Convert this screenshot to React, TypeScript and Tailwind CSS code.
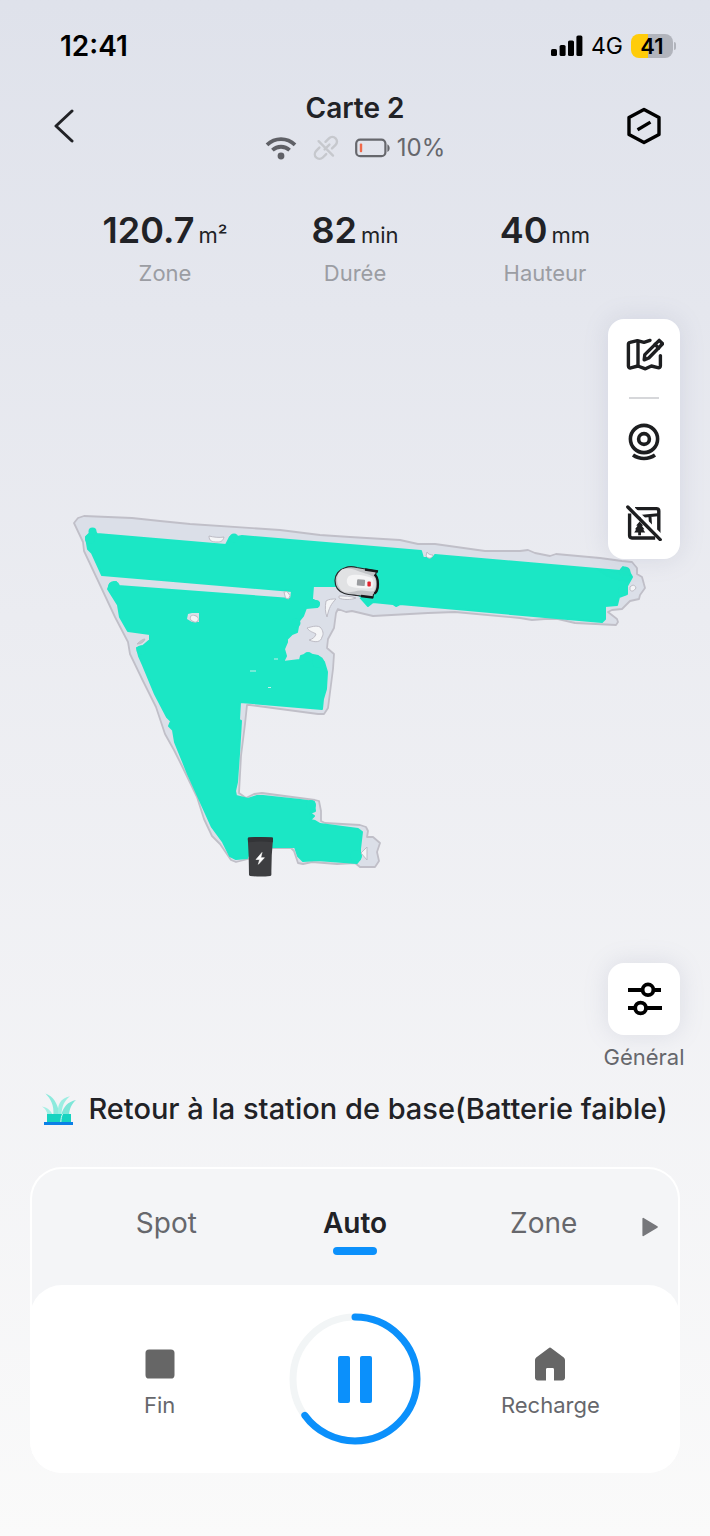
import { useState } from "react";

const stats = [
  { value: "120.7", unit: "m²", label: "Zone" },
  { value: "82", unit: "min", label: "Durée" },
  { value: "40", unit: "mm", label: "Hauteur" },
];

const modes = ["Spot", "Auto", "Zone"];

const progress = 65;

function SignalIcon() {
  return (
    <svg viewBox="0 0 32 22" className="w-8 h-[22px]" fill="#000">
      <rect x="0" y="14" width="6" height="7" rx="1.6" />
      <rect x="8.6" y="10" width="6" height="11" rx="1.6" />
      <rect x="17" y="5.5" width="6" height="15.5" rx="1.6" />
      <rect x="25.4" y="0.5" width="6" height="20.5" rx="1.6" />
    </svg>
  );
}

function WifiIcon() {
  return (
    <svg viewBox="0 0 32 24" className="w-8 h-6" fill="none" stroke="#5f6066" strokeWidth="3.8">
      <path d="M2 8.8C10 1.200 22 1.200 30 8.800" />
      <path d="M7.4 14.200c5-4.600 12.200-4.600 17.200 0" />
      <circle cx="16" cy="20" r="3.4" fill="#5f6066" stroke="none" />
    </svg>
  );
}

function UnlinkIcon() {
  return (
    <svg viewBox="0 0 26 26" className="w-[26px] h-[26px]" fill="none" stroke="#c6c8cd" strokeWidth="2.4" strokeLinecap="round">
      <path d="M12.5 6.8 16 3.3a4.6 4.6 0 0 1 6.6 6.6L19 13.400" />
      <path d="M6.4 12.6 3.2 15.9a4.6 4.6 0 0 0 6.6 6.6l3.4-3.4" />
      <path d="M5.6 6.2 20 20.6M11.6 14.400l4.800-4.800" />
    </svg>
  );
}

function BatteryIcon() {
  return (
    <svg viewBox="0 0 36 20" className="w-9 h-5" fill="none">
      <rect x="1.2" y="1.6" width="29.2" height="16.6" rx="4" stroke="#66676c" strokeWidth="2.2" />
      <rect x="4.8" y="5.6" width="2.4" height="8.6" rx="1" fill="#f0694a" />
      <path d="M32.4 6.2c3 1.6 3 6.2 0 7.8z" fill="#66676c" />
    </svg>
  );
}

function MapEditIcon() {
  return (
    <svg viewBox="0 0 40 36" className="w-10 h-9" fill="none" stroke="#1d1e20" strokeWidth="3.400" strokeLinejoin="round" strokeLinecap="round">
      <path d="M26 3.400 20 5.400 13.400 3.600 6 5.400a2 2 0 0 0-1.600 2V29c0 1.600 1 2.200 2.400 1.800l7-1.800 7.600 2.800L27.400 29l6.400 1.600c1.800.4 2.600-.2 2.600-1.800V18.600" />
      <path d="M14 4.400v24.400" />
      <path d="m20.200 22.800.6-5.200L35.200 3.400l3.400 3.400L24.800 21z" />
      <path d="m31 7.400 3.600 3.800" />
    </svg>
  );
}

function CameraIcon() {
  return (
    <svg viewBox="0 0 32 38" className="w-8 h-[38px]" fill="none" stroke="#1d1e20" strokeWidth="3.600">
      <circle cx="16" cy="16" r="13.600" />
      <circle cx="16" cy="16" r="5.400" />
      <path d="M5 32c6.400 4.600 15.600 4.600 22 0" />
    </svg>
  );
}

function HideObjectsIcon() {
  return (
    <svg viewBox="0 0 36 36" className="w-9 h-9" fill="none" stroke="#1d1e20" strokeWidth="3.400">
      <path d="M9 3.600h21.400c1.600 0 2.400.8 2.400 2.400v22.600M3.600 8.600v22c0 1.600.8 2.400 2.400 2.400h23.200" />
      <path d="M13.600 11.400 32 9.800M24 12l.6 9" strokeWidth="3" />
      <path
        d="m13.600 16.400 3.600 4.200-1.400.2 2.600 3.400-1.200.2 2 3h-4.200v2.800h-2.800v-2.800H8.200l2-3-1.200-.2 2.600-3.400-1.400-.2z"
        fill="#1d1e20"
        stroke="none"
      />
      <path d="M4 0 37.400 32.800" stroke="#fff" strokeWidth="3" />
      <path d="m1.800 2 32.400 32.600" strokeLinecap="round" />
    </svg>
  );
}

function SlidersIcon() {
  return (
    <svg viewBox="0 0 36 34" className="w-9 h-[34px]" fill="none" stroke="#000" strokeWidth="3.800">
      <path d="M2 8h14M27 8h8" />
      <circle cx="22" cy="7.800" r="5.400" />
      <path d="M2 26h7M20 26h16" />
      <circle cx="14.600" cy="26" r="5.400" />
    </svg>
  );
}

function GrassIcon() {
  return (
    <svg viewBox="0 0 34 34" className="w-[34px] h-[34px]">
      <path d="M3.4 1.4C11 4 16 11 17.4 23h-6C12 13 9 7 3.4 1.4z" fill="#8ceadd" />
      <path d="M0 14.4c5 .8 8.6 3.8 11 8.6H5.4C5.2 19.4 3.4 16.6 0 14.4z" fill="#a3efe4" />
      <path d="M28 4.2C22 9 20 14 19.4 23h-3C14.6 14 18 6 28 4.2z" fill="#9ceee2" />
      <path d="M34 8c-4.6 4-6.6 9-7 15h-7.6C21 15 26 9.6 34 8z" fill="#7de6d8" />
      <path d="M5 22h24v8H5z" fill="#16d3c0" />
      <path d="M18.8 30c.2-3.600.8-6.200 1.800-8" stroke="#d5f7f2" strokeWidth="1" fill="none" />
      <path d="M2 30h29v3H2z" fill="#0b7fe6" />
    </svg>
  );
}

function Mower() {
  return (
    <g>
      <path
        d="M376.5 572 357 568.5c-4-1-8-1.200-12 .2-6 1.800-10 7-10 12.800 0 6.400 3.600 11 9.400 13 4 1.300 8.400 1.500 12.600 2l16 2 .5-3c3.500-2 4.500-6 4.500-10 0-3.500-.5-7-2.500-9z"
        fill="#c2c4c7"
        stroke="#26282b"
        strokeWidth="1.2"
      />
      <path d="M365 570.500 378 572.500M373 598.500 361 597M374.500 575.500c4.500 3 4.500 16 0 19" stroke="#17181a" strokeWidth="2.4" fill="none" />
      <path d="M343 570c-8 4-8 18 1 23 7 1.500 12-2 18-1.500 5 .5 9 1.500 12 .5 2.500-5 2.500-10 0-14-7-3.500-11-4-16-6-5-2-9-3.500-15-2z" fill="#e1e2e4" />
      <path d="M349 577c5-2.500 16-1 23 2 2 3 2 7 0 10-8 1-18 0-23-2-3-3-3-7 0-10z" fill="#f4f4f5" />
      <rect x="357" y="580.4" width="8" height="6.4" rx="1" fill="#9b9da0" transform="rotate(5 361 583)" />
      <rect x="367.4" y="582.6" width="3.4" height="5" rx="1" fill="#e3202c" />
    </g>
  );
}

function ChargingStation() {
  return (
    <g>
      <path d="M249 838.500q11-1.200 23 0 1 0 1 1.200-1.800 18-1.600 35.800 0 1.200-1.200 1.400-9.600 1.200-20 0-1.200-.2-1.200-1.400 0-18-1.200-35.800 0-1.200 1.200-1.200z" fill="#3d3e41" />
      <path d="M249 838.500q11-1.200 23 0 1 0 1 1.200l-.2 3.600q-12-1.400-24.600 0l-.4-3.600q0-1.200 1.200-1.200z" fill="#333437" />
      <path d="m262 853.500-6 7h3.600l-1.200 4.800 6-6.600h-3.600z" fill="#fff" stroke="#fff" strokeWidth=".6" />
    </g>
  );
}

function GardenMap() {
  return (
    <svg viewBox="0 288 710 660" className="block w-full h-auto" role="img" aria-label="Carte 2">
      <path
        d="M74 524 78 519 84 517 132 519 160 522 190 525 280 531 320 536 350 538 400 541 418 545 435 545 485 552 520 552 528 551 535 554 550 557 556 555 600 559 622 562 632 563 637 569 637 575 642 578 645 589 640 596 639 600 630 602 622 610 612 611 608 613 617 620 618 623 616 626 575 624 558 620 545 620 532 621 520 619 455 613 428 614 373 617 352 612 346 613 338 610 336 614 334 629 328 640 327 649 334 655 333 670 328 709 324 715 318 715 250 706 247 706 245 725 241 757 239 794 246 799 254 795 262 794 315 801 319 802 321 812 321 822 325 824 360 826 366 828 368 832 367 838 373 838 380 844 377 853 379 862 375 868 360 868 355 864 337 865 312 863 303 865 298 864 294 852 291 849 273 849 248 860 236 863 231 861 220 845 212 837 204 820 197 798 182 767 174 751 165 735 156 708 143 682 130 655 128 643 115 618 100 586 84 552 83 543Z"
        fill="#dbdfe8"
        stroke="#c0bfc8"
        strokeWidth="1.8"
        strokeLinejoin="round"
      />
      <path
        d="M93 530 90 534 86 538 88 550 92 554 102 576 292 592 291 600 118 587 116 583 110 585 108 590 118 606 120 618 128 632 150 635 150 641 143 647 137 649 139 657 143 666 155 695 167 718 171 722 169 727 173 731 175 743 188 775 198 797 212 828 223 843 230 857 236 860 247 859 252 848 295 848 298 857 303 862 317 861 357 864 360 860 360 850 362 833 358 830 320 825 315 822 310 821 314 817 310 814 315 812 314 803 300 801 263 797 257 797 248 800 236 797 235 792 237 783 239 755 241 722 239 721 240 703 322 710 323 700 326 690 327 673 324 663 318 657 313 656 308 655 301 657 300 661 283 663 286 657 284 650 287 643 287 640 292 635 297 633 299 622 303 617 306 609 317 608 319 604 312 600 313 587 337 587 360 598 368 607 373 603 393 605 396 607 400 605 602 623 605 620 605 607 617 606 619 598 627 595 627 587 632 578 628 571 623 568 620 572 435 556 433 559 423 559 421 552 350 546 242 537 237 538 233 536 230 538 226 546 97 535Z"
        fill="#1be7c5"
        stroke="#1be7c5"
        strokeWidth="2"
        strokeLinejoin="round"
      />
      <g fill="#1be7c5">
        <circle cx="92.500" cy="532.500" r="4" />
        <circle cx="90" cy="540" r="5" />
        <circle cx="114" cy="588" r="6" />
        <circle cx="234" cy="539" r="4.500" />
        <circle cx="308" cy="658" r="5" />
        <circle cx="318" cy="663" r="6" />
        <circle cx="316" cy="605" r="4" />
        <circle cx="296" cy="624" r="4.500" />
        <circle cx="625" cy="573" r="5.500" />
        <circle cx="623" cy="592" r="5" />
        <circle cx="141" cy="651" r="4.500" />
        <circle cx="356" cy="857" r="6" />
        <circle cx="311" cy="806" r="5" />
      </g>
      <path d="m188 615 4-1h7v9h-7l-5-3z" fill="#dbdfe8" />
      <path d="m337 587-3 7 2 6 25-1-16-12z" fill="#dbdfe8" />
      <g fill="#f4f5f7" stroke="#bdbcc5" strokeWidth="1" strokeLinejoin="round">
        <path d="M209 537c4 1 10 2 15 1-1 4-3 5-7 5-5 0-8-1-8-6z" />
        <ellipse cx="194.500" cy="619.500" rx="4.200" ry="3.200" transform="rotate(25 194 619)" />
        <path d="m284 593 3-.5 3 4-1.500 3.500-3-1z" />
        <path d="M307 629c4-1 9-3 13-1 3 3 4 7 2 10-1 5-6 6-13 3 4-1 6-3 7-6-3-2-6-2-9-6z" />
        <path d="M326 602c3-2 6-2 10-2-5 5-7 9-9 18-2-5-2-10-1-16z" />
        <path d="M339 597c5 0 12 0 17 2-5 2-13 2-17 0z" />
        <path d="M427 553c1 2 3 3 6 3-1 4-5 4-7 1z" />
        <path d="M630 588c3-3 5-2 6 1-2 3-4 4-6 2z" />
        <path d="m367 848-6 6 6 7z" />
        <path d="M137 645c3-3 6-5 8-5-1 3-4 5-8 5z" fill="#c5c5cc" />
      </g>
      <g stroke="#c9eeea" strokeWidth="1.2">
        <path d="M250 672h6M268 688.500h3M274 660h4" />
      </g>
      <ChargingStation />
      <Mower />
    </svg>
  );
}

export default function App() {
  const [mode, setMode] = useState("Auto");

  return (
    <div className="min-h-screen flex flex-col bg-linear-to-b from-[#dfe2eb] via-[#ebecf1] via-40% to-[#fafafa] font-['Inter',sans-serif] text-[#212226]">
      {/* Status bar */}
      <div className="flex items-center justify-between h-[88px] pt-1 pl-[60px] pr-[34px] text-black">
        <span className="text-[28px] font-semibold">12:41</span>
        <div className="flex items-center gap-2">
          <SignalIcon />
          <span className="text-[23px]">4G</span>
          <div className="flex items-center gap-px">
            <div className="flex items-center justify-center w-[42px] h-6 rounded-lg bg-linear-to-r from-[#ffcc0a] from-40% to-[#b1b4bc] to-40% text-[22px] font-semibold">
              41
            </div>
            <span className="w-0.5 h-2 rounded-r-full bg-[#b1b4bc]" />
          </div>
        </div>
      </div>

      {/* Header */}
      <header className="flex items-center justify-between h-20 px-12">
        <button aria-label="Retour" className="mb-1 flex w-9 pl-1">
          <svg viewBox="0 0 22 36" className="w-[22px] h-9" fill="none" stroke="#212226" strokeWidth="3">
            <path d="M20 3 4 18l16 15" strokeLinecap="round" strokeLinejoin="round" />
          </svg>
        </button>
        <div className="flex flex-col items-center">
          <h1 className="text-[28px] leading-10 font-semibold">Carte 2</h1>
          <div className="flex items-center h-10 text-2xl text-[#66676c]">
            <WifiIcon />
            <span className="mx-4">
              <UnlinkIcon />
            </span>
            <BatteryIcon />
            <span className="ml-1.5">10%</span>
          </div>
        </div>
        <button aria-label="Réglages" className="mb-1 w-9">
          <svg viewBox="0 0 36 38" className="w-9 h-[38px]" fill="none" stroke="#000" strokeWidth="3.4" strokeLinejoin="round">
            <path d="M18 2.400 33 10.400v17.200L18 35.600 3 27.600V10.400z" />
            <path d="m13 22 10-6" strokeLinecap="square" />
          </svg>
        </button>
      </header>

      {/* Stats */}
      <dl className="grid grid-cols-3 px-[70px] pt-10 text-center">
        {stats.map((s) => (
          <div key={s.label} className="flex flex-col-reverse">
            <dt className="text-[22px] leading-7 text-[#9b9da3]">{s.label}</dt>
            <dd className="leading-11">
              <span className="text-4xl leading-11 font-semibold">{s.value}</span>
              <span className="ml-1 text-[22px]">{s.unit}</span>
            </dd>
          </div>
        ))}
      </dl>

      {/* Map */}
      <main className="relative">
        <GardenMap />
        <div className="absolute top-8 right-[30px] w-[72px] h-60 rounded-2xl bg-white shadow-[0_0_24px_rgba(120,130,160,0.18)] flex flex-col items-center justify-between py-[18px]">
          <button aria-label="Modifier la carte">
            <MapEditIcon />
          </button>
          <span className="w-[30px] h-0.5 bg-[#d6d7da]" />
          <button aria-label="Caméra">
            <CameraIcon />
          </button>
          <button aria-label="Masquer les objets" className="mt-5">
            <HideObjectsIcon />
          </button>
        </div>
      </main>

      <div className="self-end flex flex-col items-center w-[84px] mr-6 pt-4">
        <button
          id="general"
          aria-labelledby="general-label"
          className="w-[72px] h-[72px] rounded-2xl bg-white shadow-[0_0_24px_rgba(120,130,160,0.18)] flex items-center justify-center"
        >
          <SlidersIcon />
        </button>
        <label id="general-label" htmlFor="general" className="mt-2 text-[22px] leading-7 text-[#66676c]">
          Général
        </label>
      </div>

      {/* Current task */}
      <div className="flex items-center justify-center gap-3 mt-[18px] whitespace-nowrap">
        <GrassIcon />
        <p className="text-[29px] leading-10 font-medium">Retour à la station de base(Batterie faible)</p>
      </div>

      {/* Controls */}
      <section className="mx-[30px] mt-[38px] mb-[62px] rounded-[32px] bg-white p-0.5 pb-0">
        <div className="-mb-8 flex h-[148px] rounded-t-[30px] bg-[#f4f5f7] px-10 pb-8">
          <nav className="grid flex-1 grid-cols-3">
            {modes.map((m) => (
              <button
                key={m}
                onClick={() => setMode(m)}
                className={`flex flex-col items-center pt-[34px] text-[28px] leading-10 ${
                  m === mode ? "font-semibold text-[#212226]" : "text-[#66676c]"
                }`}
              >
                {m}
                {m === mode && <span className="mt-1 w-11 h-2 rounded-full bg-[#0b90fb]" />}
              </button>
            ))}
          </nav>
          <button aria-label="Suivant" className="-mr-10 w-10 pl-1 flex items-center">
            <svg viewBox="0 0 16 20" className="w-4 h-5" fill="#76777b" stroke="#76777b" strokeWidth="1.6" strokeLinejoin="round">
              <path d="M1.200 1.600v16.800L15 10z" />
            </svg>
          </button>
        </div>

        <div className="-mx-0.5 grid grid-cols-3 items-center rounded-[32px] bg-white px-8 py-7 text-[22px] leading-7 text-[#66676c]">
          <button className="flex flex-col items-center gap-3 pt-2.5">
            <svg viewBox="0 0 30 30" className="w-[30px] h-[30px]" fill="#666">
              <rect x="0.5" y="0.5" width="29" height="29" rx="3.6" />
            </svg>
            Fin
          </button>
          <button aria-label="Pause" className="flex justify-center">
            <svg viewBox="0 0 132 132" className="w-[132px] h-[132px]" fill="none" strokeWidth="7">
              <circle cx="66" cy="66" r="62" stroke="#f2f5f6" />
              <circle
                cx="66"
                cy="66"
                r="62"
                stroke="#0b90fb"
                pathLength="100"
                strokeDasharray={`${progress} 100`}
                strokeLinecap="round"
                transform="rotate(-90 66 66)"
              />
              <rect x="49" y="43" width="12" height="47" rx="2" fill="#0b90fb" />
              <rect x="71" y="43" width="12" height="47" rx="2" fill="#0b90fb" />
            </svg>
          </button>
          <button className="flex flex-col items-center gap-2.5 pt-2">
            <svg viewBox="0 0 32 34" className="w-8 h-[34px]" fill="#666">
              <path d="M14.6 1.2a2 2 0 0 1 2.8 0l12.4 9.2q1.200 1 1.200 2.600V30.600q0 2.800-2.800 2.800H20v-11q0-1.400-1.400-1.400h-5.200q-1.400 0-1.400 1.400v11H3.800Q1 33.400 1 30.600V13q0-1.600 1.200-2.600z" />
            </svg>
            Recharge
          </button>
        </div>
      </section>
    </div>
  );
}
